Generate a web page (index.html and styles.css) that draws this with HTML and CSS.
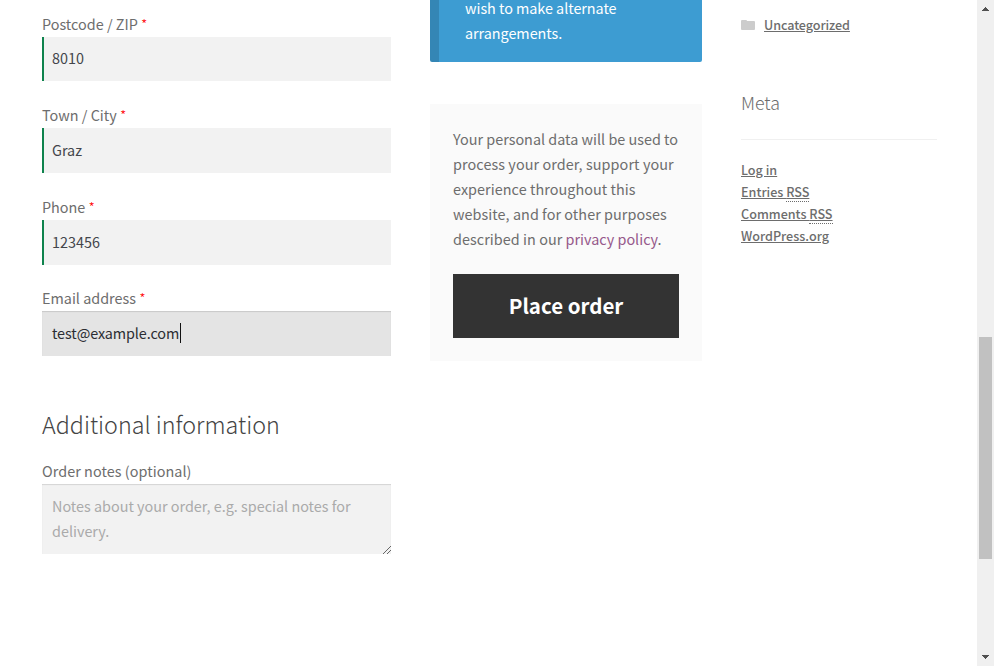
FILE: index.html
```
<!DOCTYPE html>
<html lang="en">
<head>
<meta charset="utf-8">
<title>Checkout</title>
<link rel="stylesheet" href="styles.css">
</head>
<body>
<div class="viewport">
  <main class="page">
    <form class="billing">
      <div class="field"><label>Postcode / ZIP <span class="required">*</span></label><div class="input valid"><span>8010</span></div></div>
      <div class="field"><label>Town / City <span class="required">*</span></label><div class="input valid"><span>Graz</span></div></div>
      <div class="field"><label>Phone <span class="required">*</span></label><div class="input valid"><span>123456</span></div></div>
      <div class="field"><label>Email address <span class="required">*</span></label><div class="input focused"><span>test@example.com</span><i class="caret"></i></div></div>
      <h3>Additional information</h3>
      <div class="field"><label class="wide">Order notes (optional)</label>
        <div class="notes">Notes about your order, e.g. special notes for<br>delivery.
          <svg class="grip" width="8" height="8" viewBox="0 0 8 8" shape-rendering="crispEdges"><path d="M0 7h1v1H0zM1 6h1v1H1zM2 5h1v1H2zM3 4h1v1H3zM4 3h1v1H4zM5 2h1v1H5zM6 1h1v1H6zM7 0h1v1H7zM4 7h1v1H4zM5 6h1v1H5zM6 5h1v1H6zM7 4h1v1H7z" fill="#666"/></svg>
        </div>
      </div>
    </form>
    <section class="order">
      <div class="notice">wish to make alternate<br>arrangements.</div>
      <div class="place">
        <p>Your personal data will be used to<br><span class="wider">process your order, support your</span><br><span class="wide">experience throughout this</span><br><span class="wide">website, and for other purposes</span><br><span class="wide">described in our</span> <a href="#">privacy policy</a>.</p>
        <button type="button">Place order</button>
      </div>
    </section>
    <aside>
      <div class="category">
        <svg width="14" height="10" viewBox="0 0 14 10"><path d="M0 1Q0 0 1 0H5Q6 0 6 1H13Q14 1 14 2V9Q14 10 13 10H1Q0 10 0 9Z" fill="#ccc"/></svg>
        <a href="#">Uncategorized</a>
      </div>
      <h4>Meta</h4>
      <ul>
        <li><a href="#">Log in</a></li>
        <li><a href="#">Entries <abbr>RSS</abbr></a></li>
        <li><a href="#">Comments <abbr>RSS</abbr></a></li>
        <li><a href="#">WordPress.org</a></li>
      </ul>
    </aside>
  </main>
  <div class="scrollbar">
    <svg width="7" height="4" viewBox="0 0 7 4" shape-rendering="crispEdges"><path d="M3 0h1v1H3zM2 1h3v1H2zM1 2h5v1H1zM0 3h7v1H0z" fill="#505050"/></svg>
    <div class="thumb"></div>
    <svg width="7" height="4" viewBox="0 0 7 4" shape-rendering="crispEdges"><path d="M0 0h7v1H0zM1 1h5v1H1zM2 2h3v1H2zM3 3h1v1H3z" fill="#505050"/></svg>
  </div>
</div>
</body>
</html>
```
FILE: styles.css
```
* { box-sizing: border-box; }
html, body { margin: 0; height: 666px; overflow: hidden; background: #fff; }
body { font-family: "Noto Sans CJK JP", "Noto Sans", sans-serif; font-size: 14.4px; line-height: 25px; color: #6d6d6d; }
.viewport { display: flex; height: 666px; }
.page { flex: 1; display: flex; align-items: flex-start; padding-left: 42px; white-space: nowrap; }
.billing { width: 349px; margin-right: 39px; padding-top: 11.5px; }
.field { margin-bottom: 21.6px; }
.field label { display: block; height: 25px; line-height: 23px; }
.required { color: #f00; font-weight: 300; }
.wide { letter-spacing: .05px; }
.wider { letter-spacing: .08px; }
.input { height: 44.95px; padding: 0 0 2px 10px; display: flex; align-items: center; background: #f2f2f2; color: #43454b; }
.valid { border-left: 2px solid #0f834d; padding-left: 8px; }
.focused { background: #e4e4e4; color: #2b2d33; box-shadow: inset 0 1px 1px rgba(0,0,0,.125); letter-spacing: -.1px; }
.caret { width: 1px; height: 20px; background: #111; margin-left: 1px; }
h3 { margin: 48px 0 15px; font-size: 23.3px; line-height: 40px; font-weight: 300; color: #444; }
.notes { position: relative; height: 70px; padding: 9px 10px; background: #f2f2f2; color: #aaa; box-shadow: inset 0 1px 1px rgba(0,0,0,.125); }
.grip { position: absolute; right: 0; bottom: 0; }
.order { width: 272px; margin-right: 39px; }
.notice { display: flex; align-items: flex-end; height: 62px; padding: 0 0 17px 26px; margin-bottom: 42px; border-left: 9px solid #3486b5; border-radius: 0 0 2px 2px; background: #3d9cd2; color: #fff; letter-spacing: -.04px; }
.place { height: 257px; padding: 22px 23px 23px; background: #fafafa; }
.place p { margin: 0 0 23px; }
.place a { color: #96588a; text-decoration: none; }
button { display: block; width: 226px; height: 64px; padding: 0 0 2px; border: 0; background: #333; color: #fff; font: bold 20.5px "Noto Sans CJK JP", sans-serif; }
aside { width: 196px; font-size: 12.6px; line-height: 22px; }
.category { display: flex; align-items: center; gap: 9px; padding-top: 14px; height: 36px; letter-spacing: -.08px; }
aside a { color: #6d6d6d; font-weight: 500; text-decoration: underline; }
h4 { margin: 50px 0 19px; height: 54px; border-bottom: 1px solid #f0f0f0; font-size: 17.8px; line-height: 32px; font-weight: 300; }
ul { list-style: none; margin: 0; padding: 0; }
abbr { border-bottom: 1px dotted #6d6d6d; }
.scrollbar { width: 17px; background: #f0f0f0; display: flex; flex-direction: column; align-items: center; padding: 7px 0; }
.thumb { width: 13px; height: 222px; margin: 326px 0 96px; background: #c1c1c1; }
```
